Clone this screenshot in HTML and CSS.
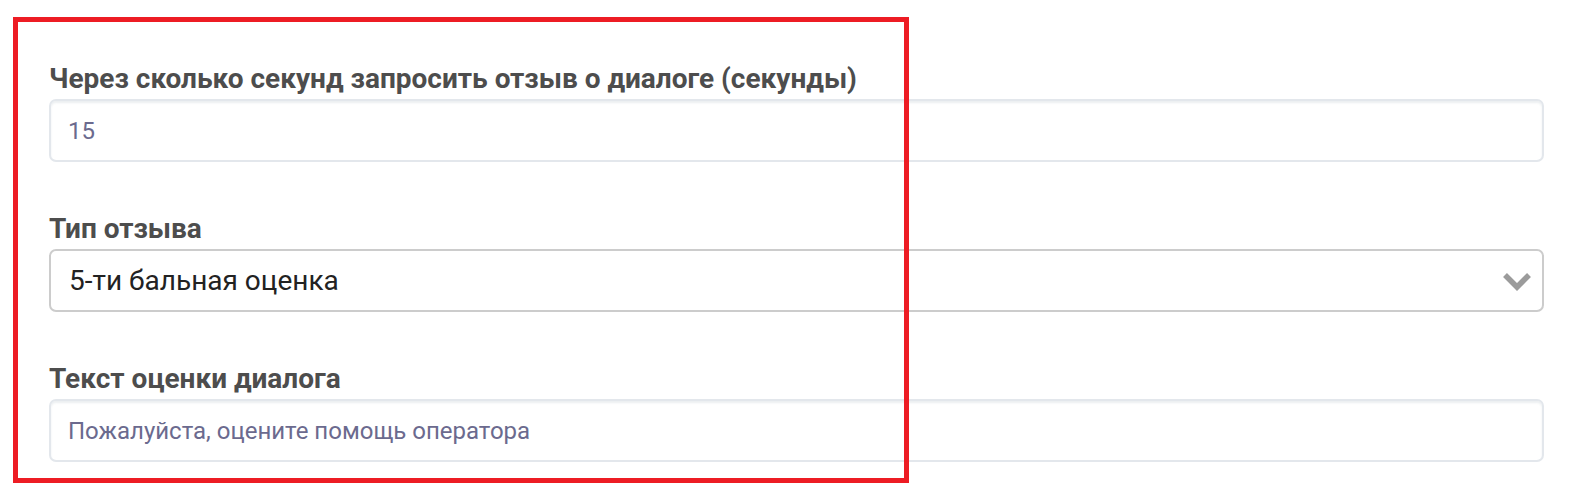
FILE: index.html
```html
<!DOCTYPE html>
<html lang="ru">
<head>
    <meta charset="utf-8">
    <title>Настройки отзыва</title>
    <link rel="stylesheet" href="styles.css">
</head>
<body>
    <form class="settings-form">
        <div class="form-group">
            <label class="form-label" for="delay">Через сколько секунд запросить отзыв о диалоге (секунды)</label>
            <input class="form-input" id="delay" type="text" value="15">
        </div>

        <div class="form-group">
            <label class="form-label" for="type">Тип отзыва</label>
            <div class="select-wrap">
                <select class="form-select" id="type">
                    <option>5-ти бальная оценка</option>
                </select>
                <svg class="select-arrow" viewBox="0 0 28 19" width="28" height="19">
                    <path d="M2 3 L14 15 L26 3" fill="none" stroke="#9b9b9b" stroke-width="5.5"/>
                </svg>
            </div>
        </div>

        <div class="form-group">
            <label class="form-label" for="rating-text">Текст оценки диалога</label>
            <input class="form-input" id="rating-text" type="text" placeholder="Пожалуйста, оцените помощь оператора">
        </div>
    </form>

    <!-- annotation frame drawn over the form -->
    <div class="highlight"></div>
</body>
</html>
```

FILE: styles.css
```css
:root {
    --font-base: Roboto, "Noto Sans", sans-serif;
    --color-label: #4d4d4d;
    --color-input-text: #6b6a8e;
    --color-select-text: #222222;
    --color-input-border: #e3e7ec;
    --color-select-border: #cccccc;
    --color-highlight: #ed1c24;
}

body {
    margin: 0;
    background: #ffffff;
    font-family: var(--font-base);
}

.settings-form {
    padding: 62px 38px 0 49px;
}

.form-group {
    margin-bottom: 50px;
}

.form-label {
    display: block;
    font-size: 28px;
    line-height: 34px;
    font-weight: 700;
    color: var(--color-label);
    margin-bottom: 3px;
}

.form-input,
.form-select {
    display: block;
    width: 100%;
    height: 63px;
    box-sizing: border-box;
    margin: 0;
    padding: 0 17px;
    border-radius: 7px;
    font-family: var(--font-base);
    background: #ffffff;
    outline: none;
}

.form-input {
    border: 2px solid var(--color-input-border);
    box-shadow: inset 0 2px 2px rgba(180, 190, 200, 0.25);
    font-size: 24px;
    color: var(--color-input-text);
}

.form-input::placeholder {
    color: var(--color-input-text);
    opacity: 1;
}

.select-wrap {
    position: relative;
}

.form-select {
    appearance: none;
    border: 2px solid var(--color-select-border);
    font-size: 28px;
    color: var(--color-select-text);
    padding-left: 18px;
}

.select-arrow {
    position: absolute;
    right: 13px;
    top: 23px;
    pointer-events: none;
}

.highlight {
    position: absolute;
    left: 13px;
    top: 17px;
    width: 896px;
    height: 466px;
    box-sizing: border-box;
    border: 5px solid var(--color-highlight);
    pointer-events: none;
}
```
